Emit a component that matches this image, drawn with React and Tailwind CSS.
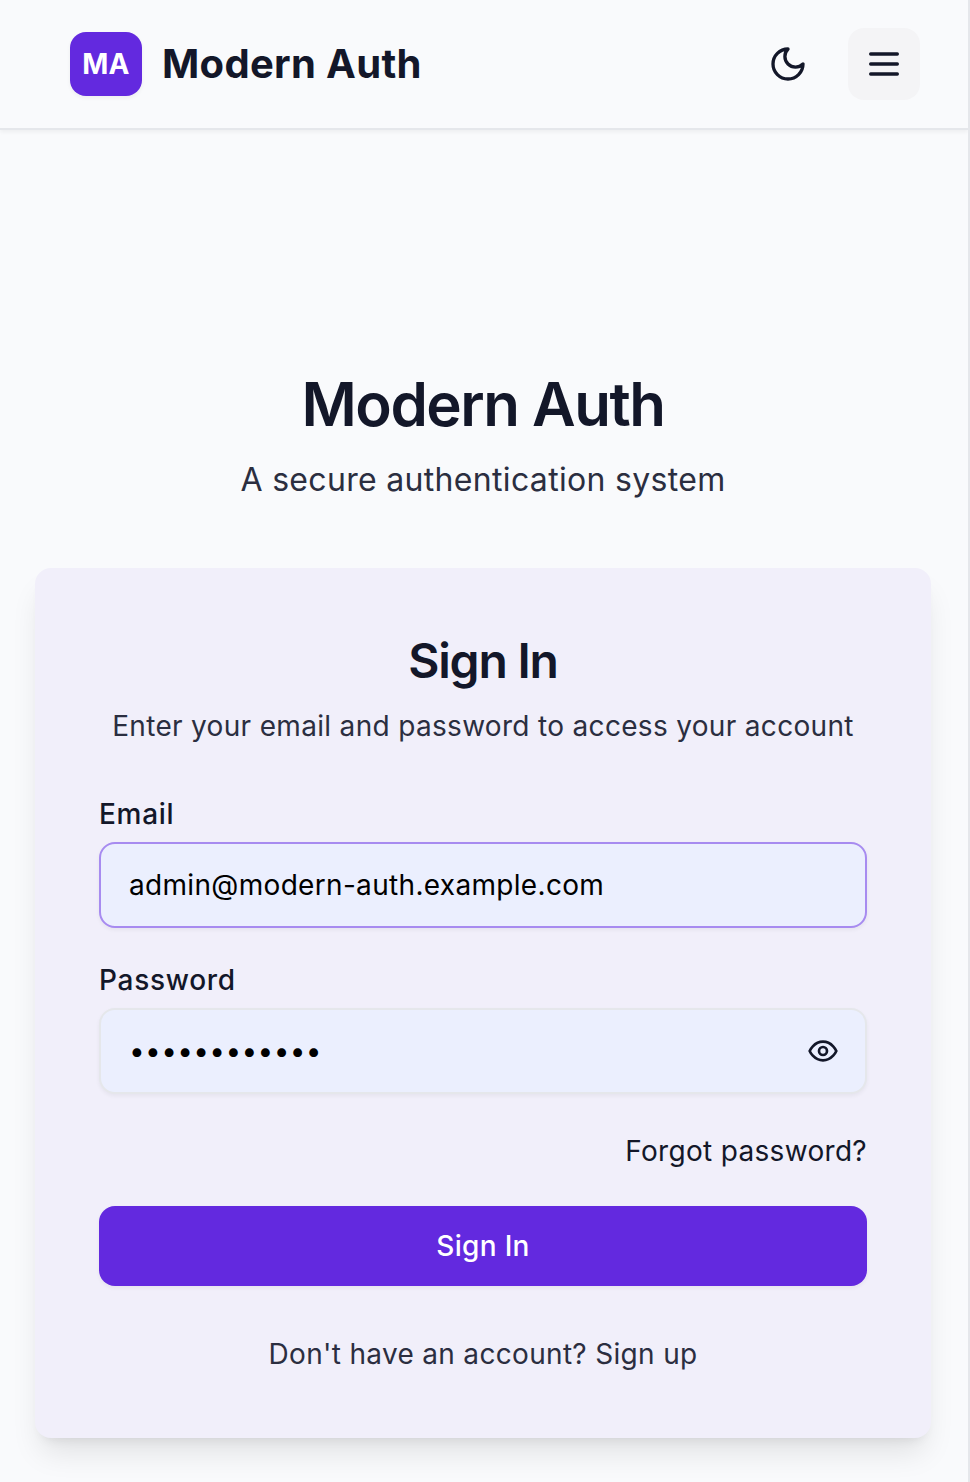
import React from "react";

function Icon({ size, children }) {
  return (
    <svg width={size} height={size} viewBox="0 0 24 24" fill="none" stroke="currentColor" strokeWidth="2" strokeLinecap="round" strokeLinejoin="round">
      {children}
    </svg>
  );
}

export default function App() {
  return (
    <div className="flex h-[1482px] w-[970px] flex-col overflow-hidden border-r-2 border-[#e5e7eb] bg-[#f9fafc] font-['Inter',sans-serif] tracking-[0.32px] text-[#131729]">
      <header className="flex h-[130px] shrink-0 items-center justify-between border-b-2 border-[#e5e7eb] pr-12 pl-[70px] shadow-[0_2px_4px_rgba(0,0,0,0.05)]">
        <div className="flex items-center gap-5">
          <div className="flex h-16 w-[72px] items-center justify-center rounded-2xl bg-[#6329df] text-[28px] font-bold text-white shadow-[0_2px_4px_rgba(0,0,0,0.05)]">MA</div>
          <span className="text-[40px] leading-none font-bold">Modern Auth</span>
        </div>
        <div className="flex items-center gap-6">
          <button className="flex size-[72px] items-center justify-center">
            <Icon size={40}><path d="M12 3a6 6 0 0 0 9 9 9 9 0 1 1-9-9Z" /></Icon>
          </button>
          <button className="flex size-[72px] items-center justify-center rounded-2xl bg-[#f4f4f6]">
            <Icon size={40}><path d="M4 6h16M4 12h16M4 18h16" /></Icon>
          </button>
        </div>
      </header>
      <main className="flex flex-col pr-[37px] pl-[35px] pt-[238px]">
        <h1 className="w-[896px] text-center text-[60px] leading-[72px] font-semibold tracking-[-1.5px]">Modern Auth</h1>
        <p className="mt-4 w-[896px] text-center text-[32px] leading-[48px] text-[#2b2e40]">A secure authentication system</p>
        <section className="mt-16 flex h-[870px] w-[896px] flex-col rounded-2xl bg-[#f1effa] px-16 pt-16 shadow-[0_20px_30px_-6px_rgba(0,0,0,0.1),0_8px_12px_-8px_rgba(0,0,0,0.1)]">
          <h2 className="text-center text-[48px] leading-[58px] font-semibold tracking-[-1.2px]">Sign In</h2>
          <p className="mt-4 text-center text-[28px] leading-10 whitespace-nowrap text-[#2b2e40]">Enter your email and password to access your account</p>
          <label className="mt-12 text-[28px] leading-10 font-medium tracking-[0.7px]">Email</label>
          <div className="mt-2 flex h-[86px] items-center rounded-2xl border-2 border-[#a78bf0] bg-[#ebeffe] px-7 text-[28px] text-black shadow-[0_2px_4px_rgba(0,0,0,0.05)]">admin@modern-auth.example.com</div>
          <label className="mt-8 text-[28px] leading-10 font-medium tracking-[0.7px]">Password</label>
          <div className="mt-2 flex h-[86px] items-center justify-between rounded-2xl border-2 border-[#e5e7eb] bg-[#ebeffe] pr-[26px] pl-7 text-black shadow-[0_2px_4px_rgba(0,0,0,0.05)]">
            <span className="text-[28px]">••••••••••••</span>
            <span className="text-[#131729]">
              <Icon size={32}>
                <path d="M2 12s3-7 10-7 10 7 10 7-3 7-10 7-10-7-10-7Z" />
                <circle cx="12" cy="12" r="3" />
              </Icon>
            </span>
          </div>
          <a className="mt-[37px] self-end text-[28px] leading-10">Forgot password?</a>
          <button className="mt-[35px] h-20 rounded-2xl bg-[#6329df] text-[28px] font-medium text-white shadow-[0_2px_4px_rgba(0,0,0,0.05)]">Sign In</button>
          <p className="mt-12 text-center text-[28px] leading-10 text-[#2b2e40]">Don't have an account? Sign up</p>
        </section>
      </main>
    </div>
  );
}
